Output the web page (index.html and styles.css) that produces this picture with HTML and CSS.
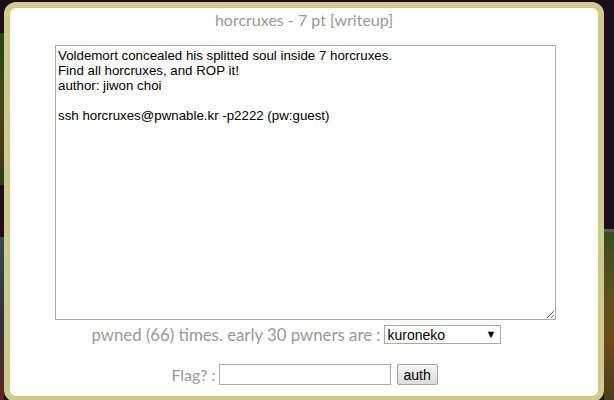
FILE: index.html
```html
<!DOCTYPE html>
<html lang="en">
<head>
    <meta charset="UTF-8">
    <title>horcruxes</title>
    <link rel="stylesheet" href="styles.css">
</head>
<body>
    <div class="dialog">
        <div class="title">horcruxes - 7 pt [writeup]</div>

        <textarea class="desc">Voldemort concealed his splitted soul inside 7 horcruxes.
Find all horcruxes, and ROP it!
author: jiwon choi

ssh horcruxes@pwnable.kr -p2222 (pw:guest)</textarea>

        <div class="row pwned-row">
            <span class="pwned-text">pwned (66) times. early 30 pwners are :</span>
            <div class="select-wrap">
                <select class="pwners">
                    <option>kuroneko</option>
                </select>
                <span class="arrow">&#9660;</span>
            </div>
        </div>

        <div class="row flag-row">
            <span>Flag? :</span>
            <input type="text" class="flag-input">
            <button class="auth-button">auth</button>
        </div>
    </div>
</body>
</html>
```

FILE: styles.css
```css
/* Reset */
* {
    box-sizing: border-box;
}

body {
    margin: 0;
    height: 400px;
    overflow: hidden;
    font-family: 'Lato', 'Open Sans', sans-serif;
    background-color: #1d0e1c; /* dark page behind the modal */
    background-image:
        linear-gradient(#24450f, #3c4a18 40%, #4a3a1c 70%, #22401a),
        linear-gradient(#3a4752, #2d343c 50%, #4b2a2c 80%, #6a1c22),
        linear-gradient(#5a5a5a 0 3px, #3d4a20 3px, #55521c 35%, #6c4a1a 65%, #48401c);
    background-size: 4px 152px, 4px 163px, 10px 171px;
    background-position: 0 33px, 0 237px, 604px 229px;
    background-repeat: no-repeat;
}

.dialog {
    width: 600px;
    height: 400px;
    margin: 2px 0 0 4px;
    padding-top: 2px;
    background-color: #ffffff;
    border: 6px solid #cfcb8c; /* olive frame */
    border-radius: 12px;
    color: #999999;
    font-size: 16px;
}

.title {
    text-align: center;
    line-height: 19px;
}

.desc {
    display: block;
    width: 501px;
    height: 275px;
    margin: 16px 0 0 45px;
    padding: 2px;
    border: 1px solid #a9a9a9;
    font-family: 'Liberation Sans', Arial, sans-serif;
    font-size: 13.3px;
    line-height: 15px;
    color: #000000;
}

.row {
    display: flex;
    justify-content: center;
    align-items: center;
    line-height: 19px;
}

.pwned-row {
    margin-top: 5px;
    padding-right: 16px;
    gap: 3px;
}

.pwned-text {
    font-size: 16.8px;
}

.select-wrap {
    position: relative;
}

.pwners {
    display: block;
    width: 117px;
    height: 19px;
    padding: 0 0 0 3px;
    border: 1px solid #a9a9a9;
    border-radius: 0;
    background: #ffffff;
    -webkit-appearance: none;
    appearance: none;
    font-family: 'Liberation Sans', Arial, sans-serif;
    font-size: 14px;
    color: #000000;
}

.arrow {
    position: absolute;
    right: 4px;
    top: 0;
    font-size: 11px;
    line-height: 18px;
    color: #000000;
    pointer-events: none;
}

.flag-row {
    margin-top: 20px;
    margin-left: 1px;
}

.flag-input {
    width: 172px;
    height: 21px;
    margin: 0 6px 0 3px;
    border: 1px solid #a9a9a9;
}

.auth-button {
    width: 41px;
    height: 21px;
    padding: 0;
    border: 1px solid #a3a3a3;
    border-radius: 2px;
    background: linear-gradient(#f6f6f6, #dcdcdc);
    font-family: 'Liberation Sans', Arial, sans-serif;
    font-size: 14px;
    color: #000000;
}
```
